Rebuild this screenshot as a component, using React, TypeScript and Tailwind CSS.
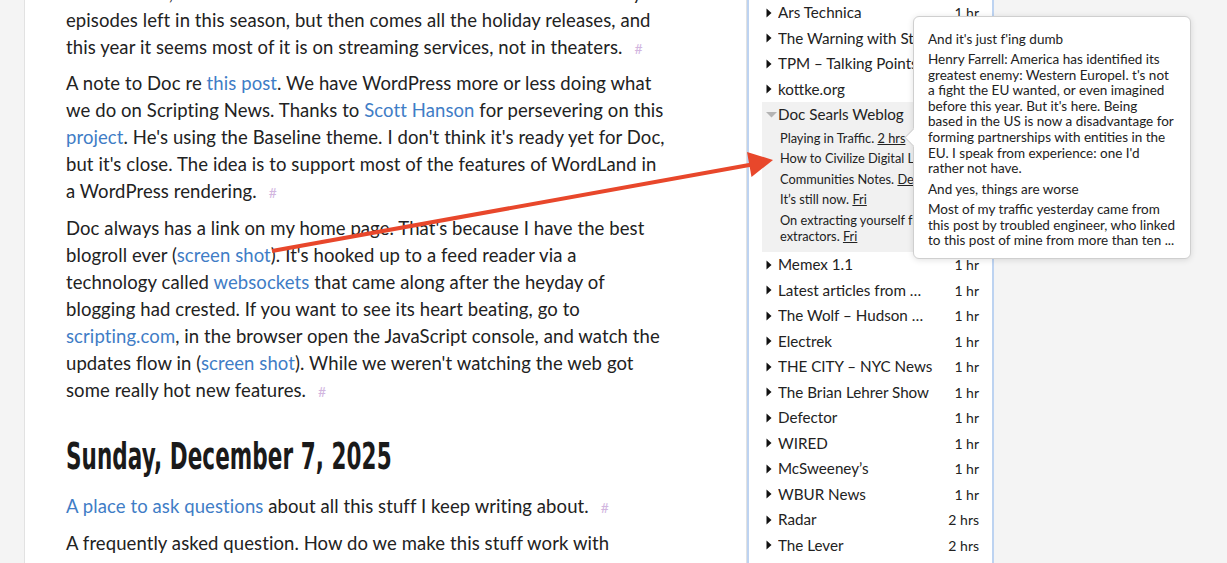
import React from "react";

type Feed = { name: string; when: string };

const feedsTop: Feed[] = [
  { name: "Ars Technica", when: "1 hr" },
  { name: "The Warning with Steve Schmidt", when: "1 hr" },
  { name: "TPM – Talking Points Memo", when: "1 hr" },
  { name: "kottke.org", when: "1 hr" },
];

const feedsBottom: Feed[] = [
  { name: "Memex 1.1", when: "1 hr" },
  { name: "Latest articles from …", when: "1 hr" },
  { name: "The Wolf – Hudson …", when: "1 hr" },
  { name: "Electrek", when: "1 hr" },
  { name: "THE CITY – NYC News", when: "1 hr" },
  { name: "The Brian Lehrer Show", when: "1 hr" },
  { name: "Defector", when: "1 hr" },
  { name: "WIRED", when: "1 hr" },
  { name: "McSweeney’s", when: "1 hr" },
  { name: "WBUR News", when: "1 hr" },
  { name: "Radar", when: "2 hrs" },
  { name: "The Lever", when: "2 hrs" },
];

const font = { fontFamily: "Lato, 'Open Sans', sans-serif" };

function A({ children }: { children: React.ReactNode }) {
  return <a className="text-[#3f7dc6]">{children}</a>;
}

function Hash() {
  return <span className="ml-[12px] text-[14px] text-[#d2b6df]">#</span>;
}

function RightTri() {
  return (
    <svg width="6" height="10" viewBox="0 0 6 10" className="shrink-0">
      <path d="M0.5 0.5 L5.5 5 L0.5 9.5 Z" fill="#111" />
    </svg>
  );
}

function DownTri() {
  return (
    <svg width="11" height="6" viewBox="0 0 11 6" className="shrink-0">
      <path d="M0 0 L11 0 L5.5 5.5 Z" fill="#b4b4b4" />
    </svg>
  );
}

function FeedRow({ feed }: { feed: Feed }) {
  return (
    <div className="flex h-[25.5px] items-center px-[4px] text-[15.2px] text-[#222]">
      <RightTri />
      <span className="ml-[6px] w-[156px] whitespace-nowrap overflow-hidden">{feed.name}</span>
      <span className="ml-auto text-[14px]">{feed.when}</span>
    </div>
  );
}

function Sub({ children, when }: { children: React.ReactNode; when: string }) {
  return (
    <div className="mb-[4.5px] pl-[18px] text-[12.8px] leading-[16px] text-[#222] whitespace-nowrap">
      {children} <span className="underline">{when}</span>
    </div>
  );
}

export default function App() {
  return (
    <div className="relative flex h-[563px] w-[1227px] overflow-hidden bg-[#f4f4f4]" style={font}>
      <div className="ml-[24px] h-full w-[723px] border-x border-[#e2e2e2] bg-white pl-[41px]">
        <div className="mt-[-20.5px] whitespace-nowrap text-[18.5px] leading-[27px] tracking-[0.09px] text-[#222]">
          <p className="mb-[8.5px]">
            Rocket Pizza, and it was too much to see now. Turns out there are only two
            <br />
            episodes left in this season, but then comes all the holiday releases, and
            <br />
            this year it seems most of it is on streaming services, not in theaters.
            <Hash />
          </p>
          <p className="mb-[8.5px]">
            A note to Doc re <A>this post</A>. We have WordPress more or less doing what
            <br />
            we do on Scripting News. Thanks to <A>Scott Hanson</A> for persevering on this
            <br />
            <A>project</A>. He's using the Baseline theme. I don't think it's ready yet for Doc,
            <br />
            but it's close. The idea is to support most of the features of WordLand in
            <br />
            a WordPress rendering.
            <Hash />
          </p>
          <p className="mb-[8.5px]">
            Doc always has a link on my home page. That's because I have the best
            <br />
            blogroll ever (<A>screen shot</A>). It's hooked up to a feed reader via a
            <br />
            technology called <A>websockets</A> that came along after the heyday of
            <br />
            blogging had crested. If you want to see its heart beating, go to
            <br />
            <A>scripting.com</A>, in the browser open the JavaScript console, and watch the
            <br />
            updates flow in (<A>screen shot</A>). While we weren't watching the web got
            <br />
            some really hot new features.
            <Hash />
          </p>
          <h2
            className="mt-[29px] mb-[15.5px] origin-left scale-x-[0.63] text-[38px] font-bold leading-[44px] text-[#1a1a1a]"
            style={{ fontFamily: "'Liberation Sans Narrow', 'DejaVu Sans Condensed', sans-serif" }}
          >
            Sunday, December 7, 2025
          </h2>
          <p className="mb-[8.5px]">
            <A>A place to ask questions</A> about all this stuff I keep writing about.
            <Hash />
          </p>
          <p className="mb-[8.5px]">
            A frequently asked question. How do we make this stuff work with
            <br />
            WordPress? And then what about all the other writing tools out there.
          </p>
        </div>
      </div>

      <div className="h-full w-[247px] border-x-2 border-[#bdd3f1] bg-white pl-[13px] pr-[9px]">
        {feedsTop.map((f) => (
          <FeedRow key={f.name} feed={f} />
        ))}
        <div className="bg-[#f1f1f1] pb-[4px]">
          <div className="flex h-[25.5px] items-center pl-[4px] text-[15.2px] text-[#222]">
            <DownTri />
            <span className="ml-[1px]">Doc Searls Weblog</span>
          </div>
          <div className="pt-[2px]">
            <Sub when="2 hrs">Playing in Traffic.</Sub>
            <Sub when="Dec 8">How to Civilize Digital Life.</Sub>
            <Sub when="Dec 7">Communities Notes.</Sub>
            <Sub when="Fri">It’s still now.</Sub>
            <div className="mb-[4.5px] pl-[18px] text-[12.8px] leading-[16px] text-[#222] whitespace-nowrap">
              On extracting yourself from value
              <br />
              extractors. <span className="underline">Fri</span>
            </div>
          </div>
        </div>
        {feedsBottom.map((f) => (
          <FeedRow key={f.name} feed={f} />
        ))}
      </div>

      {/* tooltip over the blogroll */}
      <div className="absolute left-[913px] top-[16px] h-[243px] w-[278px] rounded-[6px] border border-[#cfcfcf] bg-white pl-[14px] pt-[14px] text-[#222] shadow-[0_1px_6px_rgba(0,0,0,0.12)]">
        <div className="absolute left-[-7px] top-[114px] h-[13px] w-[13px] rotate-45 border-b border-l border-[#cfcfcf] bg-white" />
        <div className="relative whitespace-nowrap">
          <div className="mb-[5px] text-[13.5px] leading-[16px]">And it's just f'ing dumb</div>
          <div className="mb-[4.5px] text-[13.5px] leading-[15.6px]">
            Henry Farrell: America has identified its
            <br />
            greatest enemy: Western EuropeI. t's not
            <br />
            a fight the EU wanted, or even imagined
            <br />
            before this year. But it's here. Being
            <br />
            based in the US is now a disadvantage for
            <br />
            forming partnerships with entities in the
            <br />
            EU. I speak from experience: one I'd
            <br />
            rather not have.
          </div>
          <div className="mb-[5px] text-[13.5px] leading-[16px]">And yes, things are worse</div>
          <div className="text-[13.5px] leading-[15.6px]">
            Most of my traffic yesterday came from
            <br />
            this post by troubled engineer, who linked
            <br />
            to this post of mine from more than ten ...
          </div>
        </div>
      </div>

      {/* red annotation arrow */}
      <svg className="pointer-events-none absolute left-0 top-0" width="1227" height="563">
        <line x1="272" y1="251" x2="752" y2="164.5" stroke="#e8472b" strokeWidth="4" />
        <polygon points="773,160 747,152 751.5,177" fill="#e8472b" />
      </svg>
    </div>
  );
}
